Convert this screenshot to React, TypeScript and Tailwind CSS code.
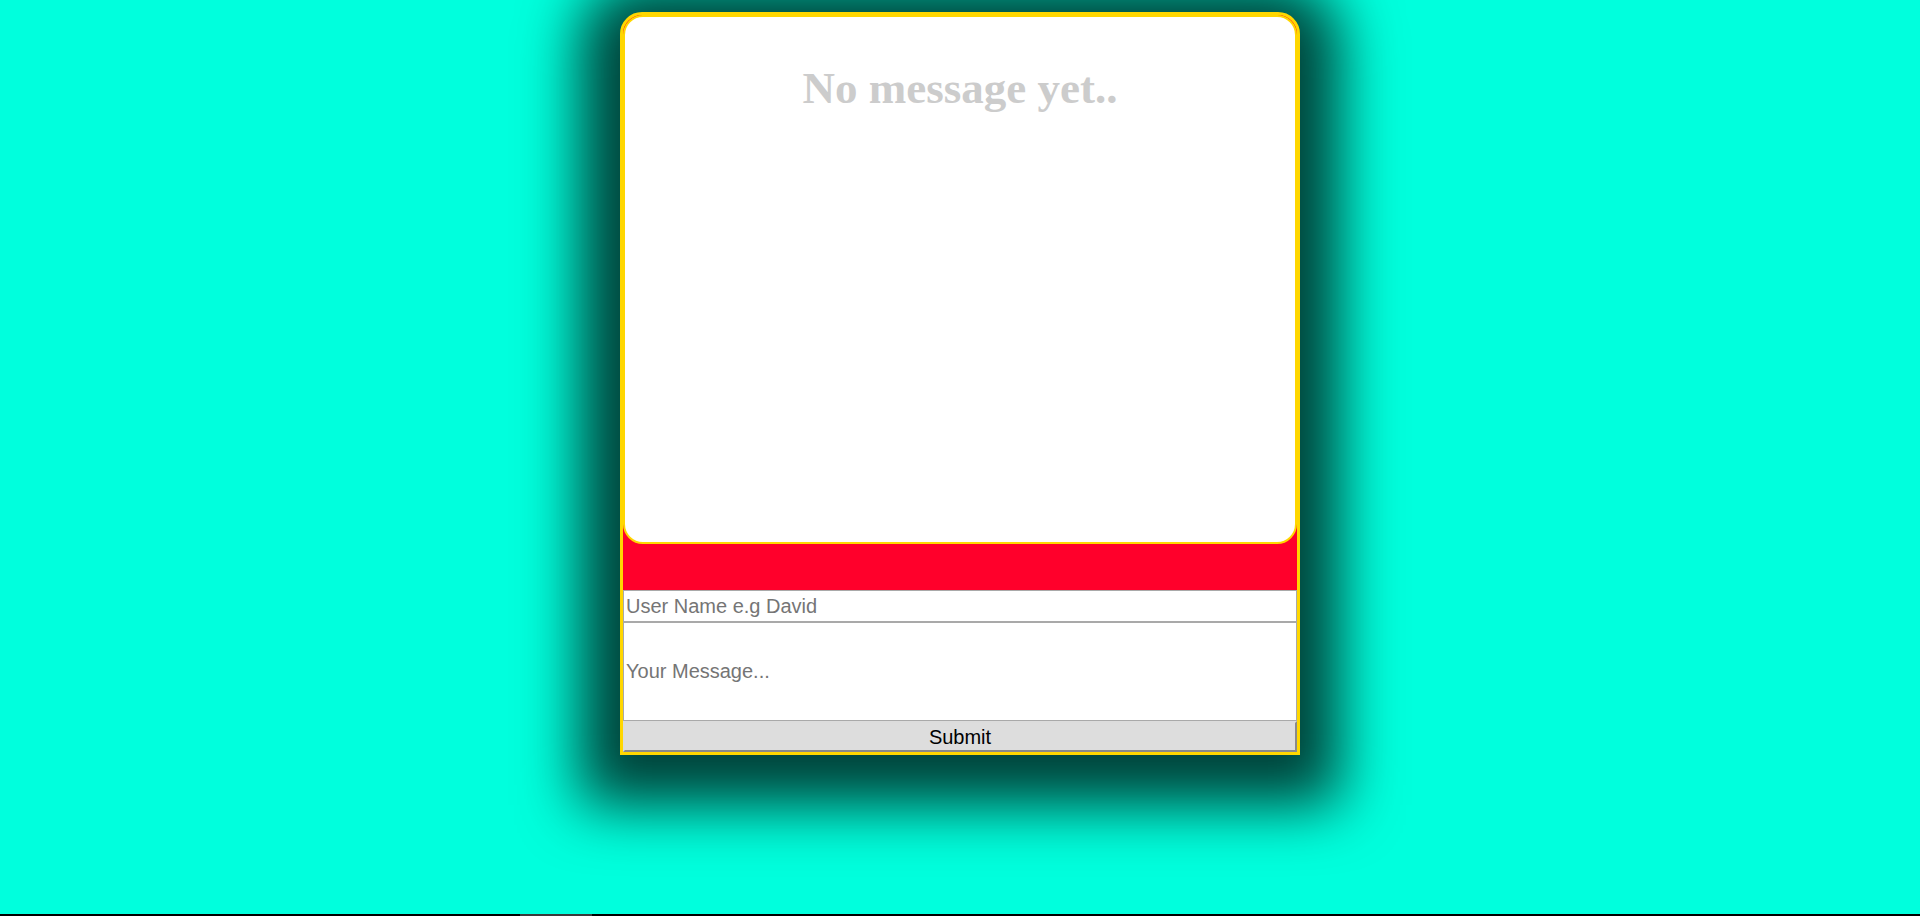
import { useState } from 'react';

const ChatBox = () => {
  return (
    <div className="h-[529px] rounded-[20px] border-2 border-[#ffd700] bg-white">
      <h1 className="mt-[46px] text-center font-['Liberation_Serif',serif] text-[45px] leading-[50px] font-bold text-[#cccccc]">
        No message yet..
      </h1>
    </div>
  );
};

const MessageForm = () => {
  const [name, setName] = useState('');
  const [message, setMessage] = useState('');

  return (
    <form className="flex flex-col" onSubmit={(e) => e.preventDefault()}>
      <input
        className="h-[32px] w-full border border-[#a9a9a9] bg-white px-[2px] font-['Liberation_Sans',Arial,sans-serif] text-[20px] text-black outline-none placeholder:text-[#757575]"
        name="name"
        placeholder="User Name e.g David"
        value={name}
        onChange={(e) => setName(e.target.value)}
      />
      <input
        className="h-[99px] w-full border border-[#a9a9a9] bg-white px-[2px] font-['Liberation_Sans',Arial,sans-serif] text-[20px] text-black outline-none placeholder:text-[#757575]"
        name="message"
        placeholder="Your Message..."
        value={message}
        onChange={(e) => setMessage(e.target.value)}
      />
      <button
        className="h-[31px] w-full border-2 border-t-[#dcdcdc] border-l-[#dcdcdc] border-r-[#8a8a8a] border-b-[#8a8a8a] bg-[#dddddd] font-['Liberation_Sans',Arial,sans-serif] text-[20px] leading-none text-black"
        type="submit"
      >
        Submit
      </button>
    </form>
  );
};

export default function App() {
  return (
    <div className="flex h-[916px] flex-col bg-[#00ffdd]">
      <main className="flex flex-1 justify-center pt-[12px]">
        <div className="h-fit w-[680px] rounded-t-[22px] border-[3px] border-[#ffd700] bg-[#ff002b] shadow-[0_10px_60px_40px_rgba(0,0,0,0.75)]">
          <ChatBox />
          <div className="h-[46px]" />
          <MessageForm />
        </div>
      </main>
      <div className="flex h-[2px] bg-black">
        <div className="ml-[520px] w-[72px] bg-[#3a3a3a]" />
      </div>
    </div>
  );
}
